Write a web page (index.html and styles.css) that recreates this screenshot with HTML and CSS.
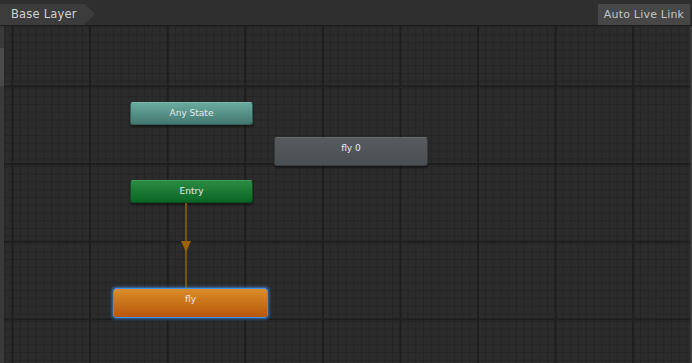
FILE: index.html
```html
<!DOCTYPE html>
<html lang="en">
<head>
    <meta charset="UTF-8">
    <title>Animator</title>
    <link rel="stylesheet" href="styles.css">
</head>
<body>
    <div class="window">
        <div class="toolbar">
            <div class="crumb">Base Layer</div>
            <div class="toolbar-fill"></div>
            <button class="live-link">Auto Live Link</button>
        </div>
        <div class="main">
            <div class="side-strip"><div class="side-thumb"></div></div>
            <div class="canvas">
                <div class="node any-state">Any State</div>
                <div class="node state">fly 0</div>
                <div class="node entry">Entry</div>
                <div class="transition">
                    <svg width="12" height="86" viewBox="0 0 12 86">
                        <line x1="6" y1="0" x2="6" y2="86" stroke="#7f5200" stroke-width="2"/>
                        <polygon points="1,38 11,38 6,49" fill="#9a6400"/>
                    </svg>
                </div>
                <div class="node state default">fly</div>
            </div>
            <div class="right-strip"></div>
        </div>
    </div>
</body>
</html>
```

FILE: styles.css
```css
body {
    margin: 0;
    padding: 0;
    background-color: #2a2a2a;
    font-family: "DejaVu Sans", sans-serif;
    overflow: hidden;
}
.window {
    width: 692px;
    height: 363px;
    display: flex;
    flex-direction: column;
}
.toolbar {
    height: 21px;
    padding-top: 4px;
    display: flex;
    background-color: #2f2f2f;
    border-bottom: 1px solid #1c1c1c;
}
.crumb {
    position: relative;
    width: 74px;
    padding-left: 11px;
    line-height: 21px;
    font-size: 11.5px;
    letter-spacing: 0.2px;
    color: #d2d2d2;
    background-color: #3c3c3c;
}
.crumb::after {
    content: "";
    position: absolute;
    right: -10px;
    top: 0;
    border-top: 10.5px solid transparent;
    border-bottom: 10.5px solid transparent;
    border-left: 10px solid #3c3c3c;
}
.toolbar-fill {
    flex: 1;
}
.live-link {
    width: 92px;
    height: 21px;
    margin-right: 2px;
    padding: 0;
    border: none;
    background-color: #474747;
    color: #c4c4c4;
    font-family: "DejaVu Sans", sans-serif;
    font-size: 11px;
    letter-spacing: 0.2px;
}
.main {
    flex: 1;
    display: flex;
}
.side-strip {
    width: 4px;
    background-color: #3a3a3a;
    padding-top: 22px;
}
.side-thumb {
    height: 38px;
    background-color: #4a4a4a;
}
.right-strip {
    width: 2px;
    background-color: #3a3a3a;
}
.canvas {
    position: relative;
    flex: 1;
    background-color: #2c2c2c;
    background-image:
        linear-gradient(to right, #1e1e1e 2px, transparent 2px),
        linear-gradient(to bottom, #1e1e1e 2px, transparent 2px),
        linear-gradient(to right, #252525 1px, transparent 1px),
        linear-gradient(to bottom, #252525 1px, transparent 1px);
    background-size: 77.6px 77.6px, 77.6px 77.6px, 7.76px 7.76px, 7.76px 7.76px;
    background-position: 7.5px 59.5px, 7.5px 59.5px, 0.5px 0.5px, 0.5px 0.5px;
}
.node {
    position: absolute;
    box-sizing: border-box;
    border-radius: 3px;
    font-family: "DejaVu Sans", sans-serif;
    font-size: 9px;
    color: #e8e8e8;
    text-align: center;
    box-shadow: 0 2px 2px rgba(0, 0, 0, 0.45);
}
.any-state {
    left: 126px;
    top: 76px;
    width: 123px;
    height: 23px;
    line-height: 20px;
    background: linear-gradient(#6aaa9e, #42786f);
    border: 1px solid #315e57;
    border-top-color: #7bb9ad;
}
.entry {
    left: 126px;
    top: 154px;
    width: 123px;
    height: 23px;
    line-height: 20px;
    background: linear-gradient(#2c8a44, #0a6624);
    border: 1px solid #0c4e1c;
    border-top-color: #3a9c52;
}
.state {
    left: 270px;
    top: 111px;
    width: 154px;
    height: 29px;
    line-height: 20px;
    background: linear-gradient(#575b60, #4b4f53);
    border: 1px solid #3a3d40;
    border-top-color: #65696e;
}
.state.default {
    left: 109px;
    top: 262px;
    width: 155px;
    height: 30px;
    line-height: 20px;
    background: linear-gradient(#dc8d2a, #b7570a);
    border: 1px solid #3f93ea;
    box-shadow: 0 0 3px 1px rgba(64, 150, 240, 0.7);
}
.transition {
    position: absolute;
    left: 176px;
    top: 177px;
    width: 12px;
    height: 86px;
}
.transition svg {
    display: block;
}
```
